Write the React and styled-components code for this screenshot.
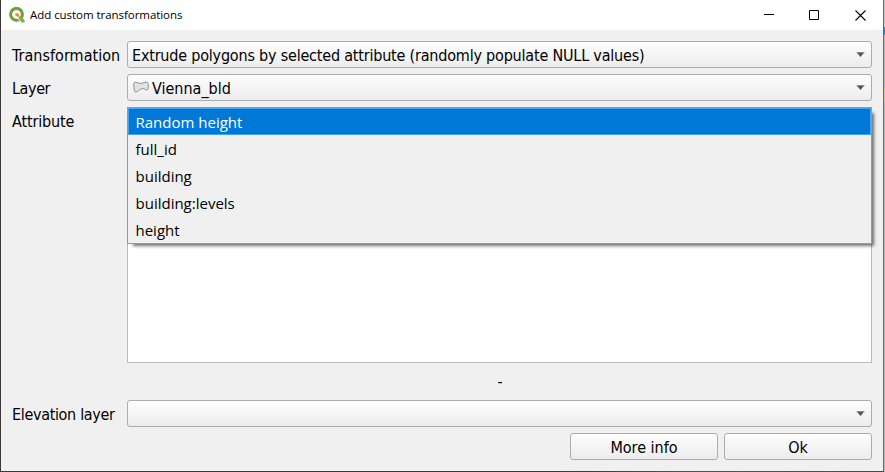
import React from "react";
import styled, { createGlobalStyle } from "styled-components";

const GlobalStyle = createGlobalStyle`
  * { box-sizing: border-box; }
  body { margin: 0; overflow: hidden; background: #bdbdbd; }
`;

const Desktop = styled.div`
  width: 885px;
  height: 472px;
  padding: 0 1px 1px;
  background:
    linear-gradient(#c9c9c9 0 27px, #2389c4 27px 35px, #bababa 35px 88px, #cfca9c 88px 102px, #bababa 102px) right / 1px 100% no-repeat,
    linear-gradient(to right, #3a3838 0 560px, #555 700px, #4a4a4a);
`;

const Dialog = styled.div`
  width: 883px;
  height: 471px;
  display: flex;
  flex-direction: column;
  background: #f0f0f0;
  border-right: 1px solid #6b6b6b;
  color: #000;
  font: 16px/27px "DejaVu Sans Condensed", "DejaVu Sans", sans-serif;
  font-stretch: condensed;
`;

const TitleBar = styled.header`
  height: 30px;
  flex: none;
  display: flex;
  align-items: center;
  padding-left: 8px;
  background: #fff;
`;

const Title = styled.h1`
  flex: 1;
  margin: 0 0 0 5px;
  font: 400 11.5px/30px "Open Sans", sans-serif;
  letter-spacing: -0.05px;
`;

const WindowButton = styled.button`
  width: ${p => p.$width}px;
  height: 30px;
  padding: 0;
  border: 0;
  background: transparent;
  display: grid;
  place-items: center;
`;

const Form = styled.main`
  flex: 1;
  padding: 11px 11px 0;
  display: flex;
  flex-direction: column;
`;

const Row = styled.div`
  display: grid;
  grid-template-columns: 115px 745px;
  min-height: 27px;
  margin-bottom: ${p => p.$gap ?? 6}px;
`;

const Text = styled.span`
  display: block;
  height: 27px;
  line-height: 29px;
  white-space: nowrap;
  letter-spacing: ${p => p.$tracking ?? 0}px;
`;

const surface = `
  height: 27px;
  border: 1px solid #acacac;
  border-radius: 3px;
  background: linear-gradient(#fefefe, #ececec);
`;

const Combo = styled.div`
  ${surface}
  display: flex;
  align-items: center;
  padding: 0 6px 0 4px;
`;

const Arrow = styled.svg`
  margin-left: auto;
  flex: none;
`;

const LayerIcon = styled.svg`
  flex: none;
  margin: 0 3px 1px 1px;
`;

const ListBox = styled.div`
  position: relative;
  height: 256px;
  background: #fff;
  border: 1px solid #b9b9b9;
`;

const Popup = styled.ul`
  position: absolute;
  top: -1px;
  left: -1px;
  width: 745px;
  height: 137px;
  margin: 0;
  padding: 0;
  list-style: none;
  background: #f0f0f0;
  border: 1px solid #989898;
  box-shadow: 4px 4px 3px -2px rgba(0, 0, 0, 0.55);
`;

const Option = styled.li`
  height: 27px;
  padding-left: 6.5px;
  border: 1px solid ${p => (p.$selected ? "#42a2f0" : "transparent")};
  background: ${p => (p.$selected ? "#0078d7" : "transparent")};
  color: ${p => (p.$selected ? "#fff" : "#000")};
  font: 15px/26px "Open Sans", sans-serif;
`;

const Status = styled.div`
  height: 37px;
  padding-left: 1px;
  text-align: center;
  line-height: 37px;
  grid-column: 2;
`;

const Actions = styled.footer`
  display: flex;
  justify-content: flex-end;
  gap: 6px;
`;

const Button = styled.button`
  ${surface}
  width: 148px;
  padding: 2px 0 0;
  color: inherit;
  font: inherit;
  line-height: 23px;
`;

const QgisLogo = () => (
  <svg width="16" height="16" viewBox="0 0 16 16">
    <circle cx="7.5" cy="7.3" r="5.9" fill="none" stroke="#6fa136" strokeWidth="3.1" />
    <path d="M10 8.7 15.9 14.3V16H12.4L8 11.2Z" fill="#fff" />
    <path d="M9.6 9.4H12L15.6 13V15.6H12.9L9.6 12Z" fill="#86ae4e" />
    <path d="M6.3 6.2H9L10.2 7.4V9.8H8.4L6.3 8.2Z" fill="#ee8548" />
  </svg>
);

const PolygonIcon = () => (
  <LayerIcon width="16" height="13" viewBox="0 0 16 13">
    <path
      d="M.7 3C.7 1.1 2.4.9 4 1.5 6.5 2.9 9.2 2.6 11.8 1.4 13.8.6 15.4 1.4 15.3 3.2L15.1 7.7C14.9 9.6 13.1 9.1 11.8 8.2 10.1 7.1 8.5 7.5 6.6 9 4.8 10.6 1.9 11.9 1.3 9.9Z"
      fill="#e2e2e2"
      stroke="#8f8f8f"
    />
  </LayerIcon>
);

const DropArrow = () => (
  <Arrow width="9" height="5" viewBox="0 0 9 5">
    <path d="M.8.6H8.2L4.5 4.9Z" fill="#505050" />
    <path d="M.5.6H8.5" stroke="#8b8b8b" />
  </Arrow>
);

const options = ["Random height", "full_id", "building", "building:levels", "height"];

export default function App() {
  return (
    <Desktop>
      <GlobalStyle />
      <Dialog>
        <TitleBar>
          <QgisLogo />
          <Title>Add custom transformations</Title>
          <WindowButton $width={42} aria-label="Minimize">
            <svg width="10" height="10"><path d="M0 4.5H10" stroke="#000" /></svg>
          </WindowButton>
          <WindowButton $width={48} aria-label="Maximize">
            <svg width="10" height="10"><path d="M.5.5H9.5V9.5H.5Z" fill="none" stroke="#000" /></svg>
          </WindowButton>
          <WindowButton $width={45} aria-label="Close">
            <svg width="11" height="11"><path d="M.5.5 10.5 10.5M10.5.5.5 10.5" stroke="#000" strokeWidth="1.1" /></svg>
          </WindowButton>
        </TitleBar>
        <Form>
          <Row>
            <Text $tracking={0.04}>Transformation</Text>
            <Combo>
              <Text $tracking={-0.2}>Extrude polygons by selected attribute (randomly populate NULL values)</Text>
              <DropArrow />
            </Combo>
          </Row>
          <Row>
            <Text $tracking={-0.4}>Layer</Text>
            <Combo>
              <PolygonIcon />
              <Text>Vienna_bld</Text>
              <DropArrow />
            </Combo>
          </Row>
          <Row $gap={0}>
            <Text $tracking={-0.15}>Attribute</Text>
            <ListBox>
              <Popup>
                {options.map((name, i) => (
                  <Option key={name} $selected={i === 0}>{name}</Option>
                ))}
              </Popup>
            </ListBox>
          </Row>
          <Row $gap={0}><Status>-</Status></Row>
          <Row>
            <Text $tracking={-0.33}>Elevation layer</Text>
            <Combo><DropArrow /></Combo>
          </Row>
          <Actions>
            <Button>More info</Button>
            <Button>Ok</Button>
          </Actions>
        </Form>
      </Dialog>
    </Desktop>
  );
}
